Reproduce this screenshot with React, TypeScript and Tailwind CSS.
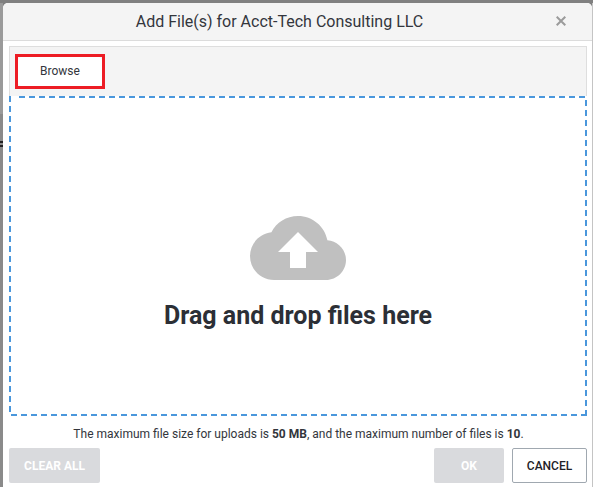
export default function App() {
  return (
    <div className="relative w-[593px] h-[487px] overflow-hidden bg-[#808080] pt-[3px] pl-[3px] font-['Roboto',sans-serif]">
      <div className="absolute left-0 top-[3px] w-[3px] h-[111px] bg-[#9a9a9a]" />
      <div className="absolute left-0 top-[114px] w-[3px] h-[373px] bg-[#8a8a8a]" />
      <div className="absolute left-0 top-[141px] w-[3px] h-[2px] bg-[#222222]" />
      <div className="absolute left-0 top-[145px] w-[3px] h-[2px] bg-[#222222]" />
      <div className="absolute right-0 top-[3px] w-[1px] h-[484px] bg-[#c4c4c4]" />
      <div className="relative w-[589px] h-[484px] bg-white rounded-tl-[5px] rounded-tr-[5px] overflow-hidden flex flex-col">
        <div className="h-[38px] shrink-0 bg-[#f4f4f4] border-b border-[#dcdcdc] flex items-center relative">
          <div className="w-full text-center text-[16px] text-[#33363c] pr-[36px]">Add File(s) for Acct-Tech Consulting LLC</div>
          <svg className="absolute right-[26px] top-[13px]" width="10" height="10" viewBox="0 0 10 10">
            <path d="M0.7 0.7 L9.3 9.3 M9.3 0.7 L0.7 9.3" stroke="#9b9b9b" strokeWidth="2" />
          </svg>
        </div>
        <div className="ml-[6px] mt-[5px] w-[578px] flex flex-col">
          <div className="h-[50px] bg-[#f4f4f4] border border-b-0 border-[#dedede] pl-[5px] pt-[7px]">
            <div className="w-[90px] h-[35px] border-[3px] border-[#ed1c24]">
              <button className="w-full h-full rounded-[4px] bg-white text-[12px] text-[#33363c] flex items-center justify-center pb-[2px]">
                Browse
              </button>
            </div>
          </div>
          <div className="h-[320px] flex flex-col items-center [background:repeating-linear-gradient(90deg,#4a97dc_0_6px,transparent_6px_10px)_10px_0/100%_2px_no-repeat,repeating-linear-gradient(90deg,#4a97dc_0_6px,transparent_6px_10px)_2px_100%/100%_2px_no-repeat,repeating-linear-gradient(180deg,#4a97dc_0_6px,transparent_6px_10px)_0_0/2px_100%_no-repeat,repeating-linear-gradient(180deg,#4a97dc_0_6px,transparent_6px_10px)_100%_4px/2px_100%_no-repeat]">
            <svg className="mt-[120px]" width="96" height="64" viewBox="0 0 96 64">
              <path
                fill="#c0c0c0"
                d="M77.4 24.2 C74.7 10.4 62.5 0 48 0 C36.4 0 26.4 6.6 21.4 16.2 C9.4 17.5 0 27.7 0 40 C0 53.3 10.7 64 24 64 H76 C87 64 96 55 96 44 C96 33.4 87.8 24.9 77.4 24.2 Z"
              />
              <path fill="#ffffff" d="M48 16 L28 36 L40 36 L40 52 L56 52 L56 36 L68 36 Z" />
            </svg>
            <div className="mt-[20px] text-[25px] leading-[32px] font-bold text-[#2c2f36]">Drag and drop files here</div>
          </div>
        </div>
        <div className="mt-[10px] h-[16px] leading-[16px] text-center text-[12px] text-[#33363c] pl-[2px]">
          The maximum file size for uploads is <b>50 MB</b>, and the maximum number of files is <b>10</b>.
        </div>
        <div className="mt-[6px] ml-[6px] w-[578px] flex items-start">
          <button className="w-[91px] h-[35px] rounded-[2px] bg-[#d9dadd] text-white font-bold text-[12px]">CLEAR ALL</button>
          <button className="ml-auto w-[70px] h-[35px] rounded-[2px] bg-[#d9dadd] text-white font-bold text-[12px]">OK</button>
          <button className="ml-[8px] w-[75px] h-[35px] rounded-[2px] bg-white border border-[#a0a8b0] text-[#1f2228] font-medium text-[12px]">CANCEL</button>
        </div>
      </div>
    </div>
  );
}
